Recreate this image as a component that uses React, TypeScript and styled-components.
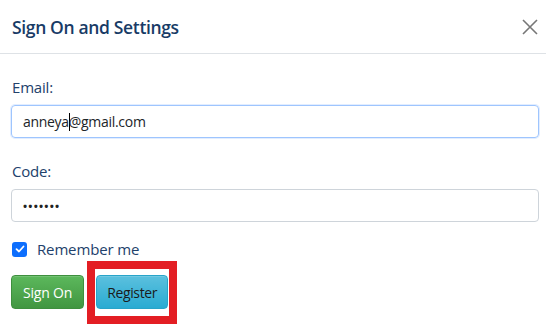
import React from "react";
import styled, { createGlobalStyle } from "styled-components";

const Global = createGlobalStyle`
  html, body { margin: 0; padding: 0; background: #fff; }
  body { font-family: "Segoe UI", "Open Sans", "Noto Sans", sans-serif; }
  * { box-sizing: border-box; }
`;

const Dialog = styled.div`
  width: 546px;
  height: 325px;
  background: #fff;
  overflow: hidden;
`;

const Header = styled.div`
  height: 54px;
  display: flex;
  align-items: center;
  justify-content: space-between;
  padding: 0 8px 0 12px;
  border-bottom: 1px solid #dee2e6;
`;

const Title = styled.h1`
  margin: 0;
  font-size: 17.5px;
  font-weight: 600;
  color: #183b66;
  letter-spacing: -0.35px;
`;

const Close = styled.button`
  width: 16px;
  height: 16px;
  padding: 0;
  border: 0;
  background: transparent;
  display: flex;
  cursor: pointer;
`;

const Body = styled.div`
  padding: 22px 7px 0 11px;
`;

const Label = styled.label`
  display: block;
  font-size: 15px;
  line-height: 22px;
  letter-spacing: -0.2px;
  color: #22416b;
  margin: 0 0 7px 1px;
`;

const Field = styled.div<{ $focused?: boolean }>`
  height: 33px;
  border: 1px solid ${(p) => (p.$focused ? "#9ec5fe" : "#ced4da")};
  border-radius: 4px;
  box-shadow: ${(p) => (p.$focused ? "0 0 0 1px rgba(13,110,253,0.12)" : "none")};
  display: flex;
  align-items: center;
  padding: 0 11px;
  font-size: 14px;
  letter-spacing: -0.3px;
  color: #212529;
  margin-bottom: 22px;
`;

const Caret = styled.span`
  display: inline-block;
  width: 1px;
  height: 18px;
  background: #000;
  margin: 0 -1px 0 0;
`;

const Dots = styled.span`
  font-size: 11px;
  font-weight: 700;
  letter-spacing: 1.2px;
  color: #222;
`;

const CheckRow = styled.label`
  display: flex;
  align-items: center;
  gap: 10px;
  font-size: 15px;
  letter-spacing: -0.15px;
  color: #22416b;
  margin: -6px 0 0 1px;
  height: 22px;
`;

const Box = styled.span`
  width: 15px;
  height: 15px;
  border-radius: 3px;
  background: #0d6efd;
  display: flex;
  align-items: center;
  justify-content: center;
`;

const Buttons = styled.div`
  display: flex;
  gap: 12px;
  margin-top: 15px;
`;

const Btn = styled.button<{ $kind: "success" | "info" }>`
  height: 34px;
  padding: 0 ${(p) => (p.$kind === "success" ? "11px" : "10px")};
  border-radius: 4px;
  font-family: inherit;
  font-size: 14px;
  letter-spacing: ${(p) => (p.$kind === "success" ? "-0.2px" : "-0.35px")};
  border: 1px solid ${(p) => (p.$kind === "success" ? "#3e8f3e" : "#28a4c9")};
  background: ${(p) =>
    p.$kind === "success"
      ? "linear-gradient(#5cb85c, #419641)"
      : "linear-gradient(#5bc0de, #2aabd2)"};
  color: ${(p) => (p.$kind === "success" ? "#fff" : "#1b1b1b")};
  box-shadow: inset 0 1px 0 rgba(255,255,255,0.15);
`;

const Highlight = styled.div`
  position: relative;
  display: flex;
  &::after {
    content: "";
    position: absolute;
    left: -9px;
    right: -9px;
    top: -14px;
    bottom: -15px;
    border: 8px solid #e31e24;
    pointer-events: none;
  }
`;

export default function App() {
  return (
    <>
      <Global />
      <Dialog>
        <Header>
          <Title>Sign On and Settings</Title>
          <Close aria-label="Close">
            <svg width="16" height="16" viewBox="0 0 16 16">
              <path d="M1 1L15 15M15 1L1 15" stroke="#777" strokeWidth="1.6" />
            </svg>
          </Close>
        </Header>
        <Body>
          <Label>Email:</Label>
          <Field $focused>
            anneya<Caret />@gmail.com
          </Field>
          <Label>Code:</Label>
          <Field>
            <Dots>•••••••</Dots>
          </Field>
          <CheckRow>
            <Box>
              <svg width="10" height="10" viewBox="0 0 10 10">
                <path d="M1.5 5.2L4 7.5L8.5 2.5" stroke="#fff" strokeWidth="1.8" fill="none" strokeLinecap="round" strokeLinejoin="round" />
              </svg>
            </Box>
            Remember me
          </CheckRow>
          <Buttons>
            <Btn $kind="success">Sign On</Btn>
            <Highlight>
              <Btn $kind="info">Register</Btn>
            </Highlight>
          </Buttons>
        </Body>
      </Dialog>
    </>
  );
}
